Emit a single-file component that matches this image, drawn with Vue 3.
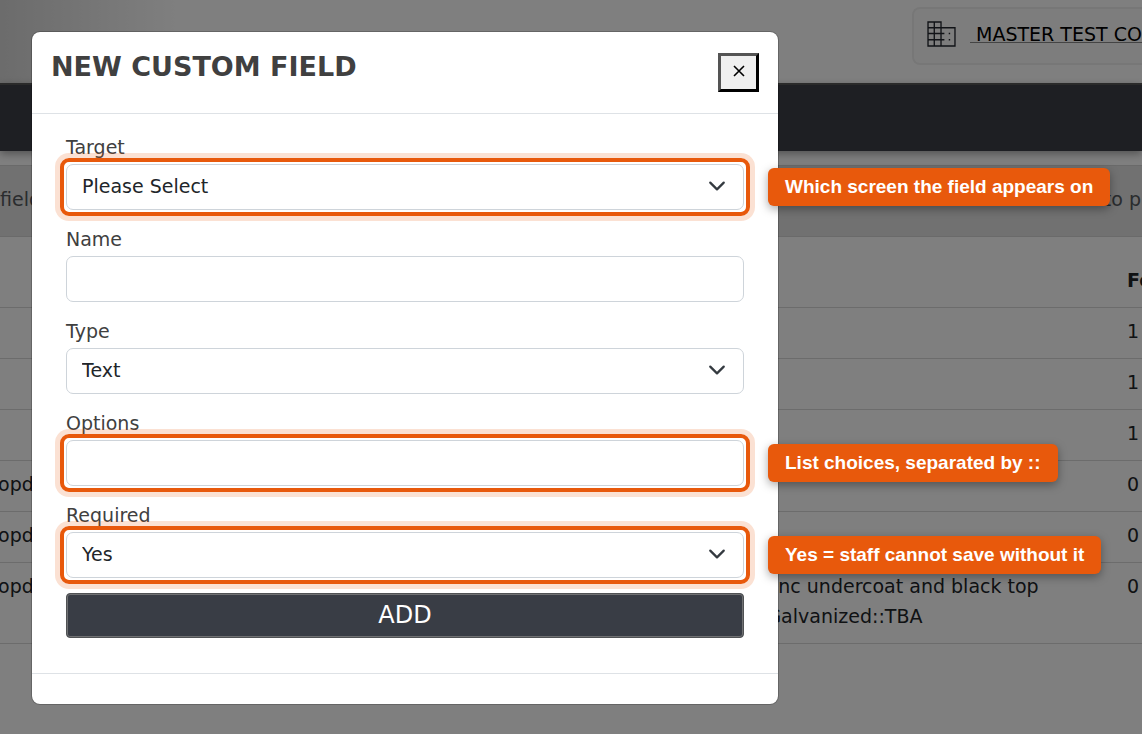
<script setup>
import { ref } from 'vue'

const target = ref('Please Select')
const name = ref('')
const type = ref('Text')
const options = ref('')
const required = ref('Yes')

const rows = [
  { type: '', options: [], order: 1 },
  { type: '', options: [], order: 1 },
  { type: '', options: [], order: 1 },
  { type: 'Dropdown', options: [], order: 0 },
  { type: 'Dropdown', options: [], order: 0 },
  { type: 'Dropdown', options: ['Zinc undercoat and black top', '/Galvanized::TBA'], order: 0 },
]
</script>

<template>
  <div class="screen">
    <div class="page">
      <header class="top">
        <div class="company">
          <svg class="building" viewBox="0 0 30 27" fill="none" stroke="#22262e" stroke-width="1.4">
            <path d="M1 1H14.500V26H1ZM14.500 7H29V26H14.500M7.500 1V26M1 7H14M1 13H18M1 19.500H18" />
            <path d="M22.500 13h1.500M22.500 19.500h1.500" />
          </svg>
          <a href="#" class="company-name">&nbsp;MASTER TEST COMPANY</a>
        </div>
      </header>
      <nav class="nav"></nav>
      <div class="notice"><span>field</span><span>to p</span></div>
      <table class="grid">
        <thead>
          <tr><th class="c-type"></th><th></th><th class="c-order">Fe</th></tr>
        </thead>
        <tbody>
          <tr v-for="(row, i) in rows" :key="i">
            <td>{{ row.type }}</td>
            <td><div v-for="line in row.options" :key="line">{{ line }}</div></td>
            <td>{{ row.order }}</td>
          </tr>
        </tbody>
      </table>
    </div>

    <div class="backdrop">
      <section class="modal" role="dialog" aria-labelledby="title">
        <header class="modal-head">
          <h1 id="title">NEW CUSTOM FIELD</h1>
          <button type="button" class="close" aria-label="Close">
            <svg viewBox="0 0 12 12" fill="none" stroke="#000" stroke-width="1.6"><path d="M1 1L11 11M11 1L1 11" /></svg>
          </button>
        </header>
        <form class="modal-body" @submit.prevent>
          <div class="field">
            <label for="target">Target</label>
            <div class="control marked">
              <select id="target" v-model="target"><option>Please Select</option></select>
              <svg class="chevron" viewBox="0 0 16 16"><path d="M2 5l6 6 6-6" /></svg>
              <span class="callout">Which screen the field appears on</span>
            </div>
          </div>
          <div class="field">
            <label for="name">Name</label>
            <div class="control"><input id="name" v-model="name" type="text" /></div>
          </div>
          <div class="field">
            <label for="type">Type</label>
            <div class="control">
              <select id="type" v-model="type"><option>Text</option></select>
              <svg class="chevron" viewBox="0 0 16 16"><path d="M2 5l6 6 6-6" /></svg>
            </div>
          </div>
          <div class="field">
            <label for="options">Options</label>
            <div class="control marked">
              <input id="options" v-model="options" type="text" />
              <span class="callout">List choices, separated by ::</span>
            </div>
          </div>
          <div class="field">
            <label for="required">Required</label>
            <div class="control marked">
              <select id="required" v-model="required"><option>Yes</option><option>No</option></select>
              <svg class="chevron" viewBox="0 0 16 16"><path d="M2 5l6 6 6-6" /></svg>
              <span class="callout">Yes = staff cannot save without it</span>
            </div>
          </div>
          <button type="submit" class="add">ADD</button>
        </form>
        <footer class="modal-foot"></footer>
      </section>
    </div>
  </div>
</template>

<style>
body {
  background: #808080;
}
</style>

<style scoped>
* {
  box-sizing: border-box;
}
.screen {
  position: relative;
  min-height: 100vh;
  overflow: hidden;
  font-family: "DejaVu Sans", sans-serif;
  font-size: 19px;
  line-height: 30px;
}
.page {
  color: #212529;
  background: #fff;
  min-height: 100vh;
}
.top {
  display: flex;
  justify-content: flex-end;
  height: 83px;
  padding-top: 7px;
  background: linear-gradient(90deg, #d8d8d8, #fff 180px);
}
.company {
  display: flex;
  align-items: center;
  gap: 14px;
  width: 230px;
  height: 58px;
  padding: 0 0 4px 13px;
  border: 2px solid #efefef;
  border-right: 0;
  border-radius: 8px 0 0 8px;
  background: #fbfbfb;
  overflow: hidden;
}
.building {
  flex: none;
  width: 29px;
  height: 26px;
}
.company-name {
  color: #000;
  white-space: nowrap;
  text-decoration: underline #888 1px;
}
.nav {
  position: relative;
  height: 68px;
  background: #3c3e46;
  border-top: 2px solid #545454;
  box-shadow: 0 3px 8px rgba(0, 0, 0, 0.35);
}
.notice {
  display: flex;
  justify-content: space-between;
  margin-top: 14px;
  padding: 18px 1px 22px 0;
  color: #54585c;
  background: #e2e2e2;
  border-top: 1px solid #d4d4d4;
  border-bottom: 1px solid #d4d4d4;
}
.grid {
  width: calc(100% + 24px);
  margin-left: -24px;
  table-layout: fixed;
  border-collapse: collapse;
  white-space: nowrap;
}
.grid th,
.grid td {
  padding: 8px 0 12px;
  text-align: left;
  vertical-align: top;
  border-bottom: 1px solid #d8d8d8;
}
.grid th {
  height: 70px;
  padding-top: 28px;
}
.c-type {
  width: 784px;
}
.c-order {
  width: 15px;
}
.backdrop {
  position: absolute;
  inset: 0;
  padding: 31px;
  background: rgba(0, 0, 0, 0.5);
}
.modal {
  max-width: 748px;
  color: #404040;
  background: #fff;
  background-clip: padding-box;
  border: 1px solid rgba(0, 0, 0, 0.2);
  border-radius: 9px;
}
.modal-head {
  display: flex;
  justify-content: space-between;
  align-items: flex-start;
  padding: 21px 19px;
  border-bottom: 1px solid #dee2e6;
}
h1 {
  margin: 0;
  font-size: 27px;
  line-height: 28px;
  font-weight: bold;
}
.close {
  display: flex;
  justify-content: center;
  align-items: flex-start;
  width: 41px;
  height: 39px;
  padding: 9px 0 0;
  background: #efefef;
  border: 3px outset #000;
}
.close svg {
  width: 12px;
  height: 12px;
}
.modal-body {
  padding: 20px 34px 35px;
}
.field {
  margin-bottom: 16px;
}
.field:last-of-type {
  margin-bottom: 15px;
}
label {
  display: block;
  margin-bottom: 4px;
  line-height: 26px;
}
.control {
  position: relative;
}
.control input,
.control select {
  display: block;
  width: 100%;
  height: 46px;
  padding: 0 15px 2px;
  font: inherit;
  color: #212529;
  background: #fff;
  border: 1px solid #ced4da;
  border-radius: 7px;
  appearance: none;
}
.chevron {
  position: absolute;
  right: 18px;
  top: 13px;
  width: 18px;
  height: 18px;
  fill: none;
  stroke: #343a40;
  stroke-width: 2;
  stroke-linecap: round;
  stroke-linejoin: round;
  pointer-events: none;
}
.marked::after {
  content: "";
  position: absolute;
  inset: -6px;
  border: 4px solid #e8590c;
  border-radius: 9px;
  box-shadow: 0 0 0 5px rgba(232, 89, 12, 0.18);
  pointer-events: none;
}
.callout {
  position: absolute;
  left: calc(100% + 24px);
  top: 4px;
  padding: 8px 17px;
  font: bold 19px/22px "Liberation Sans", sans-serif;
  color: #fff;
  white-space: nowrap;
  background: #e8590c;
  border-radius: 6px;
  box-shadow: 0 3px 10px rgba(0, 0, 0, 0.35);
}
.add {
  display: block;
  width: 100%;
  height: 45px;
  padding: 0 0 2px;
  font: 24px/30px "DejaVu Sans", sans-serif;
  color: #fff;
  background: #393d45;
  border: 1px solid #505254;
  border-radius: 4px;
  box-shadow: inset 0 0 0 1px #707173;
}
.modal-foot {
  height: 31px;
  border-top: 1px solid #dee2e6;
}
</style>
